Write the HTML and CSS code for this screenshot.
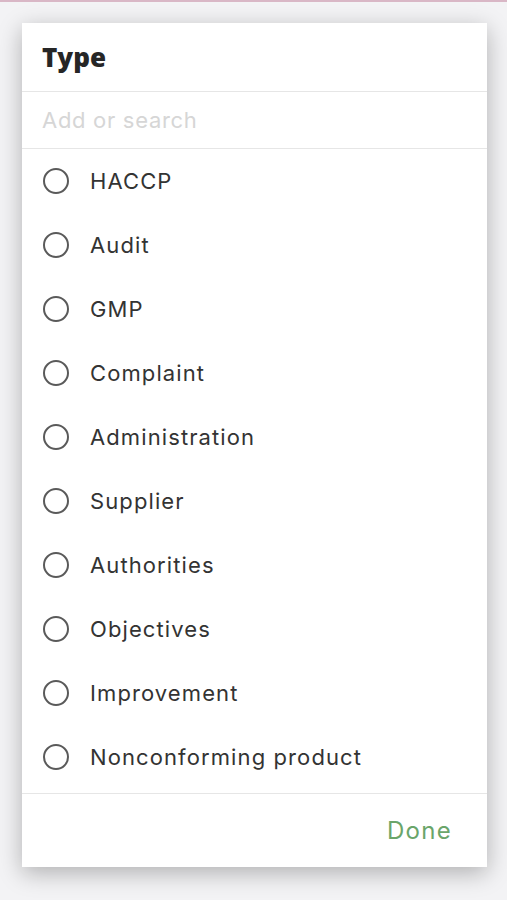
FILE: index.html
```html
<!DOCTYPE html>
<html>
<head>
<meta charset="utf-8">
<link rel="stylesheet" href="styles.css">
</head>
<body>
<div class="topline"></div>
<div class="stage">
  <div class="dialog">
    <div class="header"><h1 class="title">Type</h1></div>
    <div class="search"><input class="search-input" type="text" placeholder="Add or search"></div>
    <ul class="list">
      <li class="item"><span class="radio"></span><span class="label">HACCP</span></li>
      <li class="item"><span class="radio"></span><span class="label">Audit</span></li>
      <li class="item"><span class="radio"></span><span class="label">GMP</span></li>
      <li class="item"><span class="radio"></span><span class="label">Complaint</span></li>
      <li class="item"><span class="radio"></span><span class="label">Administration</span></li>
      <li class="item"><span class="radio"></span><span class="label">Supplier</span></li>
      <li class="item"><span class="radio"></span><span class="label">Authorities</span></li>
      <li class="item"><span class="radio"></span><span class="label">Objectives</span></li>
      <li class="item"><span class="radio"></span><span class="label">Improvement</span></li>
      <li class="item"><span class="radio"></span><span class="label">Nonconforming product</span></li>
    </ul>
    <div class="footer"><button class="done">Done</button></div>
  </div>
</div>
</body>
</html>
```
FILE: styles.css
```css
* { box-sizing: border-box; }
html, body { margin: 0; padding: 0; }
body {
  width: 507px;
  height: 900px;
  background: #f3f3f5;
  font-family: Inter, "Liberation Sans", sans-serif;
  overflow: hidden;
}
.topline {
  height: 2px;
  background: #d9b7c6;
}
.stage {
  padding: 21px 20px 0 22px;
}
.dialog {
  width: 465px;
  height: 844px;
  background: #fff;
  box-shadow: 0 6px 22px rgba(0,0,0,0.28);
  display: flex;
  flex-direction: column;
}
.header {
  height: 69px;
  border-bottom: 1px solid #e6e6e6;
  display: flex;
  align-items: center;
  padding: 0 20px;
}
.title {
  margin: 0;
  font-family: "Open Sans", "Noto Sans", sans-serif;
  font-weight: 800;
  font-size: 26px;
  color: #262626;
  padding-top: 0;
}
.search {
  height: 57px;
  border-bottom: 1px solid #e6e6e6;
  display: flex;
  align-items: center;
  padding: 0 20px;
}
.search-input {
  border: none;
  outline: none;
  width: 100%;
  font-family: Inter, "Liberation Sans", sans-serif;
  font-size: 22px;
  color: #333;
  padding: 0;
  background: transparent;
  letter-spacing: 0.7px;
}
.search-input::placeholder { color: #d6d6d6; }
.list {
  list-style: none;
  margin: 0;
  padding: 0 0 4px 0;
  border-bottom: 1px solid #e6e6e6;
}
.item {
  height: 64px;
  display: flex;
  align-items: center;
  padding-left: 21px;
}
.radio {
  width: 26px;
  height: 26px;
  border: 2px solid #5a5a5a;
  border-radius: 50%;
  flex: none;
}
.label {
  margin-left: 21px;
  font-size: 22px;
  color: #333;
  letter-spacing: 1.1px;
}
.footer {
  flex: 1;
  display: flex;
  align-items: center;
  justify-content: flex-end;
  padding-right: 35px;
}
.done {
  border: none;
  background: none;
  padding: 0;
  font-family: Inter, "Liberation Sans", sans-serif;
  font-size: 24px;
  color: #6aa56a;
  cursor: pointer;
  letter-spacing: 1.3px;
}
```
